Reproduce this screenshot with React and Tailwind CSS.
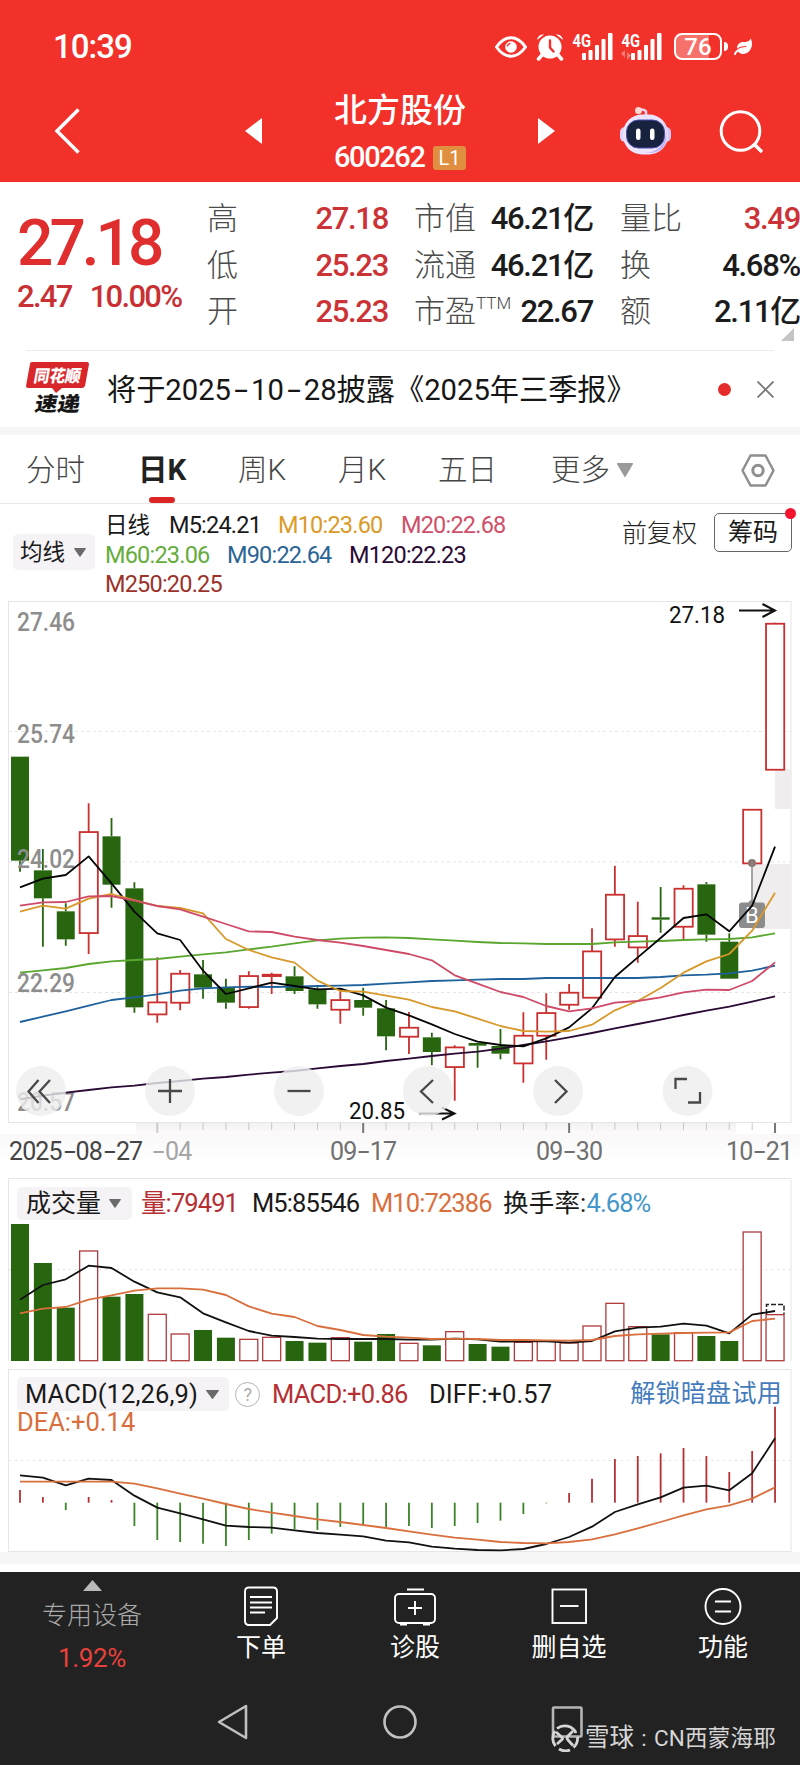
import { FaLeaf } from 'react-icons/fa'

const RED = '#c9302f'
const GREEN = '#27660f'

// x position of the nth trading day
const px = (i) => 20 + i * 22.88

// [high, body top, body bottom, low, up?] in thirds of a pixel
const candles = [
  [50, 50, 362, 395, 0], [327, 391, 475, 620, 0], [490, 514, 598, 617, 0], [190, 275, 578, 642, 1],
  [234, 289, 434, 503, 0], [427, 445, 802, 818, 0], [652, 786, 822, 848, 1], [690, 700, 787, 811, 1],
  [660, 703, 743, 776, 0], [716, 741, 788, 806, 0], [694, 707, 800, 806, 1], [698, 703, 707, 762, 1],
  [679, 709, 753, 762, 0], [742, 748, 793, 806, 0], [748, 779, 808, 851, 1], [743, 780, 803, 827, 0],
  [780, 805, 889, 931, 0], [816, 862, 889, 942, 1], [878, 892, 936, 976, 0], [916, 921, 980, 1082, 1],
  [908, 909, 917, 983, 0], [867, 918, 941, 958, 0], [817, 886, 969, 1028, 1], [760, 818, 886, 959, 1],
  [732, 757, 793, 809, 1], [565, 633, 772, 773, 1], [377, 463, 597, 620, 1], [485, 587, 621, 668, 1],
  [441, 532, 539, 578, 0], [436, 445, 559, 600, 1], [426, 433, 584, 605, 0], [580, 605, 716, 716, 0],
  [207, 208, 369, 369, 1], [-352, -350, 88, 88, 1],
]

const ma = [
  ['#5aa62f', [698, 691, 684, 672, 664, 660, 657, 650, 643, 637, 628, 620, 610, 601, 596, 593, 592, 594, 598, 602, 606, 609, 610, 612, 612, 612, 607, 605, 603, 600, 598, 597, 592, 580]],
  ['#1f619b', [846, 830, 814, 797, 780, 772, 763, 752, 745, 742, 740, 741, 740, 738, 737, 735, 731, 727, 723, 721, 719, 717, 717, 714, 714, 714, 714, 714, 711, 706, 704, 700, 692, 677]],
  ['#2b0a35', [1078, 1067, 1058, 1050, 1042, 1037, 1029, 1023, 1016, 1011, 1004, 998, 993, 985, 978, 972, 963, 956, 948, 941, 935, 926, 915, 904, 892, 879, 865, 852, 839, 825, 812, 800, 785, 769]],
  ['#050505', [442, 416, 405, 349, 430, 515, 580, 600, 692, 762, 745, 728, 738, 748, 746, 766, 803, 826, 853, 882, 905, 915, 919, 895, 862, 805, 711, 652, 594, 534, 523, 574, 497, 320]],
  ['#d9982a', [515, 497, 506, 476, 462, 480, 498, 504, 520, 597, 630, 652, 668, 722, 753, 755, 767, 779, 801, 814, 836, 858, 873, 875, 873, 854, 811, 783, 744, 698, 664, 642, 572, 458]],
  ['#cf4a66', [497, 487, 486, 469, 468, 482, 498, 508, 530, 552, 574, 576, 590, 600, 608, 618, 630, 642, 661, 706, 731, 756, 771, 798, 814, 805, 788, 783, 772, 757, 749, 750, 723, 667]],
]

const volumes = [
  [162, 0], [279, 0], [413, 0], [243, 1], [380, 0], [372, 0], [433, 1], [492, 1], [480, 0], [503, 0], [508, 1], [502, 1],
  [513, 0], [518, 0], [503, 1], [515, 0], [492, 0], [520, 1], [526, 0], [485, 1], [522, 0], [530, 0], [517, 1], [514, 1],
  [519, 1], [468, 1], [400, 1], [470, 1], [493, 0], [488, 1], [498, 0], [513, 0], [186, 1], [434, 1],
]
const volM5 = [389, 345, 328, 287, 294, 335, 367, 382, 430, 457, 483, 497, 501, 506, 507, 507, 507, 509, 509, 506, 508, 515, 514, 514, 518, 513, 484, 473, 470, 461, 467, 490, 434, 423]
const volM10 = [430, 416, 411, 389, 376, 362, 355, 355, 359, 375, 409, 431, 441, 468, 480, 495, 500, 503, 507, 506, 507, 510, 510, 511, 512, 510, 498, 493, 491, 489, 488, 487, 453, 446]

const macd = [960, 981, 1020, 981, 990, 1068, 1110, 1116, 1121, 1128, 1110, 1091, 1078, 1080, 1071, 1065, 1071, 1068, 1074, 1068, 1059, 1052, 1032, 1000, 969, 926, 867, 858, 850, 834, 858, 906, 843, 710]
const diff = [916, 923, 946, 926, 930, 977, 1013, 1030, 1048, 1067, 1071, 1073, 1081, 1089, 1094, 1099, 1112, 1117, 1130, 1136, 1140, 1141, 1137, 1122, 1101, 1070, 1026, 1003, 982, 953, 947, 961, 910, 805]
const dea = [935, 935, 935, 935, 935, 941, 955, 971, 986, 1002, 1017, 1028, 1038, 1048, 1056, 1065, 1074, 1084, 1094, 1103, 1109, 1116, 1119, 1120, 1116, 1108, 1093, 1075, 1056, 1036, 1018, 1006, 986, 952]

function Line({ data, base, color }) {
  const points = data.map((v, i) => `${px(i)},${base + v / 3}`).join(' ')
  return <polyline points={points} fill="none" stroke={color} strokeWidth="1.8" strokeLinejoin="round" />
}

// Long dash used in dates
function Dash({ className }) {
  return <span className={`inline-block text-center ${className}`}><span className="inline-block scale-x-[1.7]">-</span></span>
}

function Caret({ className, color = '#6a6a6a' }) {
  return (
    <svg className={className} viewBox="0 0 12 9" preserveAspectRatio="none">
      <path d="M0.5 0.5h11L6 8.5z" fill={color} stroke={color} strokeLinejoin="round" />
    </svg>
  )
}

function Signal({ dim }) {
  return (
    <svg className="h-[44px] w-[44px]" viewBox="0 -8 44 44" fill="#fff">
      <text x="0.5" y="13.5" fontSize="18.5" fontWeight="700" textLength="18.5" lengthAdjust="spacingAndGlyphs">4G</text>
      <rect x="10" y="20" width="4" height="7" rx="1" />
      <rect x="16.5" y="17" width="4" height="10" rx="1" />
      <rect x="23" y="12" width="4" height="15" rx="1" />
      <rect x="29.5" y="6" width="4" height="21" rx="1" />
      <rect x="36" y="0" width="4.5" height="27" rx="1" />
      {dim && <path d="M4 17v8l-4-4.5zM6 19v8l4-4.5z" fill="#ff9a94" opacity=".7" />}
    </svg>
  )
}

function StatusBar() {
  return (
    <div className="flex h-[92px] items-center pt-[1px] pl-[53px] text-white">
      <span className="w-[442px] text-[33px] leading-none font-medium tracking-[-1px]">10:39</span>
      <svg className="h-[22px] w-[32px]" viewBox="0 0 32 22" fill="none" stroke="#fff" strokeWidth="3">
        <path d="M1.5 11C6 4.500 11 1.800 16 1.800S26 4.500 30.500 11C26 17.500 21 20.200 16 20.200S6 17.500 1.500 11z" />
        <circle cx="16" cy="11" r="5.800" fill="#fff" stroke="none" />
        <path d="M12.500 10.500a3.500 3.500 0 0 1 3-3.200" stroke="#f1312a" strokeWidth="1.300" />
      </svg>
      <svg className="ml-[9px] h-[28px] w-[28px]" viewBox="0 0 28 28" fill="#fff">
        <circle cx="14" cy="14" r="11.500" />
        <path d="M1 7a6 6 0 0 1 7-5.500zM27 7a6 6 0 0 0-7-5.500z" />
        <path d="M6 22l-3.500 4M22 22l3.500 4" stroke="#fff" strokeWidth="3.500" strokeLinecap="round" />
        <path d="M14 7.500v7l3.500 4" fill="none" stroke="#f1312a" strokeWidth="2.400" strokeLinecap="round" />
      </svg>
      <div className="ml-[8px] flex"><Signal /></div>
      <div className="ml-[5px] flex"><Signal dim /></div>
      <div className="ml-[9px] flex h-[27px] w-[48px] items-center justify-center rounded-[8px] border-2 border-white bg-linear-to-r from-[#f7716b] from-75% to-[#f1312a] to-75% text-[24px] leading-none font-medium">76</div>
      <div className="ml-[2px] h-[9px] w-[4px] rounded-r bg-white" />
      <FaLeaf className="ml-[6px] h-[20px] w-[18px]" />
    </div>
  )
}

function Robot() {
  return (
    <svg className="ml-[65px] h-[48px] w-[51px]" viewBox="0 0 51 48">
      <path d="M26 9V4.500q-1-2-5-2" fill="none" stroke="#e9d5f3" strokeWidth="2.500" />
      <circle cx="18.500" cy="3.500" r="3.500" fill="#ffd9d6" />
      <rect x="0" y="20" width="10" height="15" rx="5" fill="#ddd3fb" />
      <rect x="41" y="20" width="10" height="15" rx="5" fill="#d3c9f8" />
      <rect x="3" y="7.500" width="45" height="40" rx="19" fill="#ece4fd" />
      <path d="M42 14q8 12 0 24q-6 7-16 8q22 1 20.500-20q0-7-4.500-12z" fill="#c3b1f2" />
      <rect x="6.500" y="13" width="38" height="28" rx="12" fill="#17223f" stroke="#4c4fae" strokeWidth="1" />
      <rect x="16" y="21.500" width="4.500" height="11.500" rx="2.200" fill="#fff" />
      <rect x="30" y="21.500" width="4.500" height="11.500" rx="2.200" fill="#fff" />
    </svg>
  )
}

function TitleBar() {
  return (
    <div className="flex h-[90px] items-center pb-[13px] pl-[54px] text-white">
      <svg className="h-[46px] w-[26px]" viewBox="0 0 26 46" fill="none" stroke="#fff" strokeWidth="3.500">
        <path d="M24.500 1.500L3 23l21.500 21.500" />
      </svg>
      <svg className="ml-[165px] h-[26px] w-[17px]" viewBox="0 0 17 26" fill="#fff"><path d="M17 0v26L0 13z" /></svg>
      <div className="mt-[7px] ml-[72px] w-[132px]">
        <div className="text-[33px] leading-[47px] font-medium whitespace-nowrap">北方股份</div>
        <div className="flex items-center justify-between leading-[47px]">
          <span className="text-[29px] font-medium tracking-[-1.400px]">600262</span>
          <span className="h-[24px] w-[33px] rounded-[3px] bg-[#e08e40] text-center text-[20px] leading-[25px]">L1</span>
        </div>
      </div>
      <svg className="ml-[72px] h-[26px] w-[17px]" viewBox="0 0 17 26" fill="#fff"><path d="M0 0v26l17-13z" /></svg>
      <Robot />
      <svg className="ml-[48px] h-[44px] w-[44px]" viewBox="0 0 44 44" fill="none" stroke="#fff" strokeWidth="3">
        <circle cx="21.500" cy="22" r="19.300" />
        <path d="M35 35l8 8" strokeWidth="3.500" />
      </svg>
    </div>
  )
}

const stats = [
  { className: 'w-[181px]', rows: [['高', '27.18', true], ['低', '25.23', true], ['开', '25.23', true]] },
  { className: 'ml-[26px] w-[179px]', rows: [['市值', '46.21亿'], ['流通', '46.21亿'], ['市盈', '22.67', false, 'TTM']] },
  { className: 'ml-[27px] w-[180px]', rows: [['量比', '3.49', true], ['换', '4.68%'], ['额', '2.11亿']] },
]

function Quote() {
  return (
    <div className="relative flex h-[168px] pl-[17px]">
      <div className="w-[190px] whitespace-nowrap">
        <div className="mt-[32px] text-[64px] leading-[60px] font-medium tracking-[-4px] text-[#e02d2d]">27.18</div>
        <div className="mt-[7px] flex gap-[18px] text-[31px] leading-[32px] font-medium tracking-[-1.700px] text-[#c93034]">
          <span>2.47</span><span>10.00%</span>
        </div>
      </div>
      {stats.map((col, i) => (
        <div key={i} className={`pt-[14px] ${col.className}`}>
          {col.rows.map(([label, value, up, sup]) => (
            <div key={label} className="flex h-[46.500px] items-center justify-between whitespace-nowrap">
              <span className="flex text-[31px] leading-[46px] font-light text-[#4b4b4b]">
                {label}
                {sup && <span className="mt-[-9px] text-[17px]">{sup}</span>}
              </span>
              <span className={`text-[31px] leading-[46px] font-medium tracking-[-1.300px] ${up ? 'text-[#cb3336]' : 'text-[#1c1c1c]'}`}>{value}</span>
            </div>
          ))}
        </div>
      ))}
      <svg className="absolute right-[6px] bottom-[9px] h-[13px] w-[13px]" viewBox="0 0 13 13"><path d="M13 0v13H0z" fill="#c4c4c4" /></svg>
    </div>
  )
}

function News() {
  return (
    <>
      <div className="mx-[26px] flex h-[77px] items-center border-t border-[#ededed]">
        <svg className="h-[66px] w-[63px] overflow-visible" viewBox="0 -5 63 66">
          <path d="M6 1h55q2 0 2 2l-4 22q-1 2-3 2H36l-6 5-4-5H2q-2 0-2-2L4 3q0-2 2-2z" fill="#d8262b" />
          <g fontFamily="Noto Sans CJK SC" fontWeight="900">
            <text transform="translate(7 20.500) skewX(-10)" fontSize="17" fill="#fff" textLength="47" lengthAdjust="spacingAndGlyphs">同花顺</text>
            <text transform="translate(8 49.500) skewX(-10)" fontSize="20" fill="#161616" textLength="45" lengthAdjust="spacingAndGlyphs">速递</text>
          </g>
        </svg>
        <span className="mt-[3px] ml-[18px] w-[603px] text-[29.200px] whitespace-nowrap text-[#161616]">
          将于2025<Dash className="w-[20px]" />10<Dash className="w-[20px]" />28披露《2025年三季报》
        </span>
        <span className="ml-[9px] h-[13px] w-[13px] shrink-0 rounded-full bg-[#e52b2b]" />
        <svg className="ml-[26px] h-[17px] w-[17px] shrink-0" viewBox="0 0 17 17" stroke="#777" strokeWidth="1.800"><path d="M.5.5l16 16M16.500.5l-16 16" /></svg>
      </div>
      <div className="h-[8px] bg-[#f6f6f6]" />
    </>
  )
}

function Tabs() {
  return (
    <div className="flex h-[69px] items-center border-b border-[#e8e8e8] pt-[2px] pl-[26px] text-[29.500px] font-light whitespace-nowrap text-[#454545]">
      <span className="w-[112px]">分时</span>
      <span className="relative w-[100px] font-bold text-[#222]">
        日K
        <span className="absolute bottom-[-11px] left-[11px] h-[6px] w-[26px] rounded-full bg-[#dc2626]" />
      </span>
      <span className="w-[100px]">周K</span>
      <span className="w-[100px]">月K</span>
      <span className="w-[113px]">五日</span>
      <span className="w-[66px]">更多</span>
      <Caret className="h-[14px] w-[16px]" color="#9a9a9a" />
      <svg className="ml-[108px] h-[33px] w-[34px]" viewBox="0 0 34 33" fill="none" stroke="#8f8f8f" strokeWidth="2.500" strokeLinejoin="round">
        <path d="M9.500 1.500h15L32.500 16.500 24.500 31.500h-15L1.500 16.500z" />
        <circle cx="17" cy="16.500" r="5.200" strokeWidth="3" />
      </svg>
    </div>
  )
}

function Legend() {
  return (
    <div className="flex h-[96px] whitespace-nowrap">
      <div className="mt-[30px] ml-[13px] flex h-[36px] w-[82px] items-center justify-between rounded-[5px] bg-[#f5f3f5] pt-[1px] pr-[9px] pl-[7px] text-[22.500px]">
        均线<Caret className="h-[9px] w-[12px]" />
      </div>
      <div className="ml-[10px] w-[416px] pt-[7px] text-[23.500px] leading-[29.500px] tracking-[-0.800px]">
        <div className="flex">
          <span className="w-[64px] text-[22.500px] tracking-normal">日线</span>
          <span className="w-[109px]">M5:24.21</span>
          <span className="w-[123px] text-[#dc9a28]">M10:23.60</span>
          <span className="text-[#cf506a]">M20:22.68</span>
        </div>
        <div className="flex">
          <span className="w-[122px] text-[#64ad3c]">M60:23.06</span>
          <span className="w-[122px] text-[#2a6596]">M90:22.64</span>
          <span className="text-[#2b0a35]">M120:22.23</span>
        </div>
        <div className="text-[#9c332b]">M250:20.25</div>
      </div>
      <span className="mt-[15px] ml-[101px] w-[87px] text-[25px] leading-[30px] font-light text-[#222]">前复权</span>
      <span className="relative mt-[9px] ml-[5px] h-[39px] w-[78px] rounded-[5px] border border-[#666] text-center text-[25px] leading-[38px]">
        筹码
        <span className="absolute -top-[6px] -right-[5px] h-[11px] w-[11px] rounded-full bg-[#f5142d]" />
      </span>
    </div>
  )
}

const controls = [
  ['41', 'M38.500 1080l-10 11.500 10 11.500M50 1080l-10.500 11.500L50 1103'],
  ['170', 'M158 1091h24M170 1079v24'],
  ['299', 'M287.500 1091h23'],
  ['428', 'M433 1080l-12 11.500 12 11.500'],
  ['558', 'M555 1080l11.500 11.500-11.500 11.500'],
  ['687.500', 'M675.500 1089v-10H687M700 1092v10.500h-12'],
]

const prices = [['27.46', 631], ['25.74', 743], ['24.02', 868], ['22.29', 992], ['20.57', 1111]]

function KChart() {
  const y = (v) => 740 + v / 3
  return (
    <>
      <svg className="block h-[534px] w-[800px]" viewBox="0 600 800 534">
        <defs>
          <linearGradient id="haze" x1="0" y1="0" x2="0" y2="1">
            <stop offset="0" stopColor="#f3f1f2" />
            <stop offset="1" stopColor="#fcfafb" />
          </linearGradient>
        </defs>
        <rect x="136" y="1123" width="600" height="11" fill="url(#haze)" />
        <rect x="8.500" y="601.500" width="782.500" height="521" fill="none" stroke="#e6e6e6" />
        <path d="M9 731.500H791M9 862H791M9 992.500H791" stroke="#e4e4e4" strokeDasharray="3 3" />
        <rect x="775" y="769" width="16" height="40" fill="#f0edef" />
        <rect x="752" y="864" width="39" height="65" fill="#f0edef" />
        {candles.map(([hi, top, bottom, lo, up], i) => (
          <g key={i} stroke={up ? RED : GREEN} strokeWidth="1.800">
            <path d={`M${px(i)} ${y(hi)}V${y(top)}M${px(i)} ${y(bottom)}V${y(lo)}`} />
            {up
              ? <rect x={px(i) - 9} y={y(top) + 0.4} width="18.200" height={y(bottom) - y(top)} fill="#fff" />
              : <rect x={px(i) - 9} y={y(top)} width="18" height={y(bottom) - y(top)} fill={GREEN} stroke="none" />}
          </g>
        ))}
        <g fontSize="25" fontWeight="500" fill="#8d8d8d">
          {prices.map(([text, ty]) => (
            <text key={text} x="17" y={ty} textLength="58" lengthAdjust="spacingAndGlyphs">{text}</text>
          ))}
        </g>
        <circle cx="752" cy="863" r="4" fill="#8b7676" />
        <path d="M752 863v40" stroke="#888" strokeWidth="1.500" />
        <path d="M742 902.500h6l4-3.500 4 3.500h6q3 0 3 3V925q0 3-3 3h-20q-3 0-3-3v-19.500q0-3 3-3z" fill="#8c8c8c" />
        <text x="745" y="922.500" fontSize="22" fill="#fff">B</text>
        {ma.map(([color, data]) => <Line key={color} data={data} base={740} color={color} />)}
        <g fontSize="23.500" fill="#111">
          <text x="669" y="623" textLength="56" lengthAdjust="spacingAndGlyphs">27.18</text>
          <text x="349" y="1119" textLength="56" lengthAdjust="spacingAndGlyphs">20.85</text>
        </g>
        <g fill="none" stroke="#111" strokeWidth="2">
          <path d="M739 610.500h35M762.500 604l12.500 6.500-12.500 6.500" />
          <path d="M419 1113.500h35M442 1107.500l12.500 6-12.500 6" />
        </g>
        {controls.map(([cx, d]) => (
          <g key={cx}>
            <circle cx={cx} cy="1091" r="25" fill="#eeeeee" fillOpacity=".8" />
            <path d={d} fill="none" stroke="#484848" strokeWidth="2.300" />
          </g>
        ))}
        {candles.map((_, i) => i > 5 && (
          i % 9 === 6
            ? <path key={i} d={`M${px(i)} 1123v10`} stroke={i === 6 ? '#ccc' : '#777'} strokeWidth="2" />
            : <path key={i} d={`M${px(i)} 1123v7`} stroke="#c6c6c6" />
        ))}
      </svg>
      <div className="flex h-[44px] bg-gradient-to-b from-[#faf8f9] to-white to-60% pl-[9px] text-[25px] leading-[36px] tracking-[-0.700px] whitespace-nowrap text-[#707070]">
        <span className="w-[142px] tracking-[-0.900px] text-[#444]">2025<Dash className="w-[14px]" />08<Dash className="w-[14px]" />27</span>
        <span className="w-[179px] text-[#a5a5a5]"><Dash className="w-[14px]" />04</span>
        <span className="w-[206px]">09<Dash className="w-[13px]" />17</span>
        <span className="w-[190px]">09<Dash className="w-[13px]" />30</span>
        <span>10<Dash className="w-[13px]" />21</span>
      </div>
    </>
  )
}

function Volume() {
  const y = (v) => 1170 + v / 3
  return (
    <div className="relative">
      <svg className="block h-[191px] w-[800px]" viewBox="0 1178 800 191">
        <path d="M8.500 1361V1178.500H791V1361" fill="none" stroke="#e6e6e6" />
        <path d="M9 1269.500H791" stroke="#e4e4e4" strokeDasharray="2 4" />
        {volumes.map(([top, up], i) => (
          up
            ? <rect key={i} x={px(i) - 9} y={y(top)} width="18" height={1360.7 - y(top)} fill="#fff" stroke="#b03a3c" strokeWidth="1.300" />
            : <rect key={i} x={px(i) - 9} y={y(top)} width="18" height={1361 - y(top)} fill={GREEN} />
        ))}
        <path d="M766.500 1314v-9.500h17.500V1314" fill="none" stroke="#222" strokeWidth="1.500" strokeDasharray="5 2" />
        <Line data={volM5} base={1170} color="#111" />
        <Line data={volM10} base={1170} color="#d96f3d" />
      </svg>
      <div className="absolute top-[9px] left-[17px] flex items-center text-[25.500px] leading-[33px] tracking-[-0.900px] whitespace-nowrap text-[#1a1a1a]">
        <span className="flex h-[33px] w-[115px] items-center rounded-[5px] bg-[#f5f3f5] pl-[9px] text-[25px] tracking-normal">
          成交量<Caret className="ml-[8px] h-[9px] w-[12px]" />
        </span>
        <span className="ml-[9px] w-[111px] text-[#b52f33]">量:79491</span>
        <span className="w-[119px]">M5:85546</span>
        <span className="w-[132px] text-[#d96f3d]">M10:72386</span>
        <span className="tracking-[0.200px]">换手率:</span>
        <span className="text-[#4597ca]">4.68%</span>
      </div>
    </div>
  )
}

function Macd() {
  const y = (v) => 1170 + v / 3
  return (
    <div className="relative">
      <svg className="block h-[183px] w-[800px]" viewBox="0 1369 800 183">
        <rect x="8.500" y="1369.500" width="782.500" height="182" fill="none" stroke="#e6e6e6" />
        <path d="M9 1460.500H791" stroke="#e4e4e4" strokeDasharray="2 4" />
        {macd.map((v, i) => (
          <path key={i} d={`M${px(i)} ${y(998)}V${y(v)}`} stroke={v < 998 ? '#b52f33' : '#3a8426'} strokeWidth="1.800" />
        ))}
        <Line data={diff} base={1170} color="#111" />
        <Line data={dea} base={1170} color="#d96f3d" />
      </svg>
      <div className="absolute top-[8px] left-[17px] flex w-[765px] items-center text-[25.500px] leading-[34px] tracking-[-0.700px] whitespace-nowrap text-[#1a1a1a]">
        <span className="flex h-[34px] w-[212px] items-center rounded-[5px] bg-[#f5f3f5] pl-[8px]">
          <span className="w-[172px] tracking-[0.100px]">MACD(12,26,9)</span><Caret className="ml-[9px] h-[9px] w-[13px]" />
        </span>
        <span className="ml-[6px] h-[25px] w-[25px] rounded-full border-[1.500px] border-[#b5b5b5] text-center text-[18px] leading-[23px] text-[#aaa]">?</span>
        <span className="ml-[12px] w-[157px] text-[#b52f33]">MACD:+0.86</span>
        <span className="tracking-[0.100px]">DIFF:+0.57</span>
        <span className="ml-auto text-[25px] tracking-[0.300px] text-[#437bbd]">解锁暗盘试用</span>
      </div>
      <div className="absolute top-[38px] left-[17px] text-[25.500px] leading-[31px] tracking-[0px] text-[#d96f3d]">DEA:+0.14</div>
    </div>
  )
}

const actions = [
  ['下单', <><path d="M7 2.500h24q4 0 4 4V33l-7 7H7q-4 0-4-4V6.500q0-4 4-4z" /><path d="M8 12h22M8 17.500h22M8 22.500h22M8 27.500h15" /></>],
  ['诊股', <><rect x="-1" y="9" width="40" height="29" rx="4" /><path d="M11 4.500h17M19 16v14M12 23h14M4 39.500h7M27 39.500h7" /></>],
  ['删自选', <><rect x="2.500" y="4.500" width="33.500" height="33.500" /><path d="M10 21h18.500" /></>],
  ['功能', <><circle cx="19" cy="21.500" r="17.500" /><path d="M11 16.500h16M11 26.500h16" /></>],
]

function BottomNav() {
  return (
    <div className="h-[194px] bg-[#222]">
      <div className="flex h-[118px]">
        <div className="flex w-[184px] flex-col items-center pt-[8px]">
          <svg className="h-[11px] w-[19px]" viewBox="0 0 19 11"><path d="M9.500 0L19 11H0z" fill="#b9b9b9" /></svg>
          <span className="mt-[7px] text-[25px] leading-[36px] font-light text-[#a9a9a9]">专用设备</span>
          <span className="mt-[6px] text-[26px] leading-[36px] tracking-[-0.300px] text-[#e8413b]">1.92%</span>
        </div>
        {actions.map(([label, icon]) => (
          <div key={label} className="flex w-[154px] flex-col items-center pt-[13px] text-white">
            <svg className="h-[43px] w-[38px] overflow-visible" viewBox="0 0 38 43" fill="none" stroke="#fff" strokeWidth="1.900">{icon}</svg>
            <span className="mt-[2px] text-[25px] leading-[36px]">{label}</span>
          </div>
        ))}
      </div>
      <div className="relative grid grid-cols-3 justify-items-center px-[150px] pt-[14px]">
        <svg className="h-[36px] w-[32px]" viewBox="0 0 32 36" fill="none" stroke="#c0c0c0" strokeWidth="2.600" strokeLinejoin="round"><path d="M29 2v32L2 18z" /></svg>
        <svg className="h-[36px] w-[36px]" viewBox="0 0 36 36" fill="none" stroke="#c0c0c0" strokeWidth="2.600"><circle cx="18" cy="18" r="15.500" /></svg>
        <svg className="h-[36px] w-[32px]" viewBox="0 0 32 36" fill="none" stroke="#b5b5b5" strokeWidth="2.600"><rect x="2" y="3.500" width="28.500" height="29" rx="1" /></svg>
        <div className="absolute top-[33px] left-[551px] flex items-center text-[22.500px] leading-[30px] whitespace-nowrap text-[#d6d6d6]">
          <svg className="h-[28px] w-[28px]" viewBox="0 0 28 28" fill="none" stroke="#d6d6d6" strokeWidth="2.800">
            <path d="M6 4.500A12.500 12.500 0 0 1 25 9M26.500 13a12.500 12.500 0 0 1-4 10.500M19 26A12.500 12.500 0 0 1 8 25M4.500 22A12.500 12.500 0 0 1 4 7" />
            <path d="M5 8l6 5.500q1 1 0 2L6 20M22 7l-5 5q-2 2 0 4l5 5.500" />
          </svg>
          <span className="ml-[6px] text-[24.500px]">雪球</span>
          <span className="w-[20px] text-center">:</span>
          <span className="tracking-[0.200px]">CN西蒙海耶</span>
        </div>
      </div>
    </div>
  )
}

export default function App() {
  return (
    <div className="h-[1765px] w-[800px] overflow-hidden bg-white font-['Roboto','Noto_Sans_CJK_SC',sans-serif] text-[#1a1a1a]">
      <header className="bg-[#f1312a]">
        <StatusBar />
        <TitleBar />
      </header>
      <Quote />
      <News />
      <Tabs />
      <Legend />
      <KChart />
      <Volume />
      <Macd />
      <div className="mb-[8px] h-[12px] bg-[#f6f6f6]" />
      <BottomNav />
    </div>
  )
}
